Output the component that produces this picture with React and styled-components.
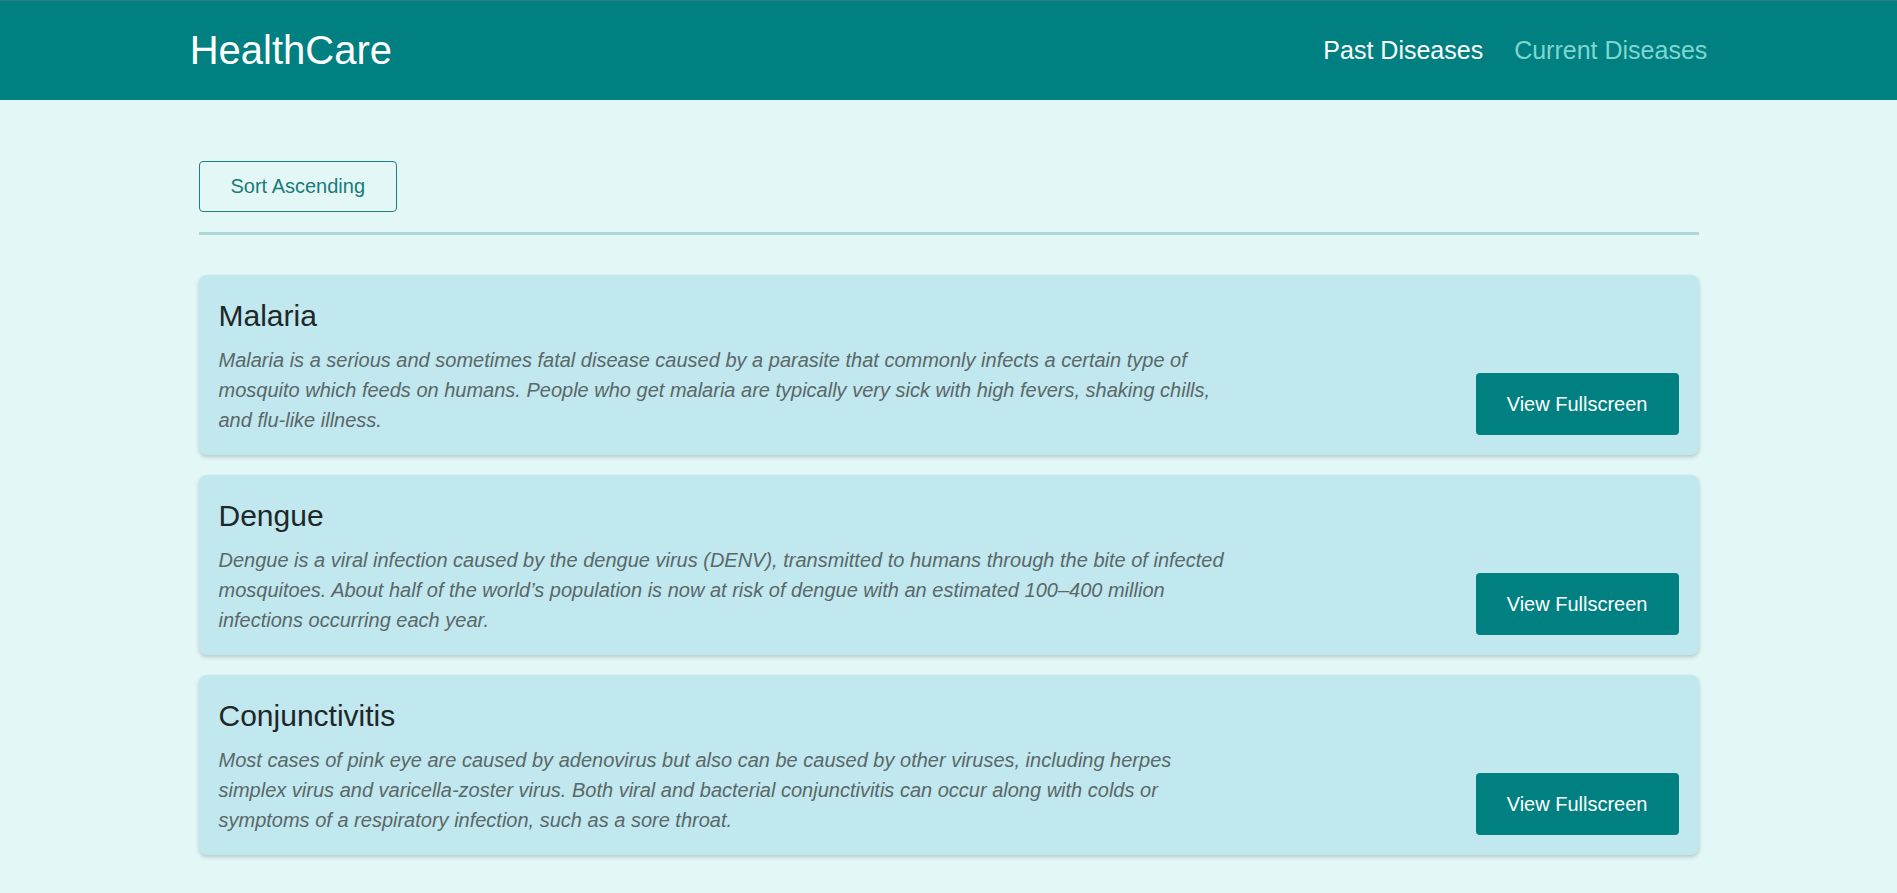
import styled, { createGlobalStyle } from "styled-components";

const GlobalStyle = createGlobalStyle`
  body {
    margin: 0;
    background-color: #e4f7f7;
    font-family: "Liberation Sans", Arial, sans-serif;
  }
`;

const diseases = [
  {
    id: 1,
    name: "Malaria",
    text: "Malaria is a serious and sometimes fatal disease caused by a parasite that commonly infects a certain type of mosquito which feeds on humans. People who get malaria are typically very sick with high fevers, shaking chills, and flu-like illness.",
  },
  {
    id: 2,
    name: "Dengue",
    text: "Dengue is a viral infection caused by the dengue virus (DENV), transmitted to humans through the bite of infected mosquitoes. About half of the world’s population is now at risk of dengue with an estimated 100–400 million infections occurring each year.",
  },
  {
    id: 3,
    name: "Conjunctivitis",
    text: "Most cases of pink eye are caused by adenovirus but also can be caused by other viruses, including herpes simplex virus and varicella-zoster virus. Both viral and bacterial conjunctivitis can occur along with colds or symptoms of a respiratory infection, such as a sore throat.",
  },
];

const App = () => {
  return (
    <>
      <GlobalStyle />
      <Navbar>
        <NavInner>
          <Brand>HealthCare</Brand>
          <NavLinks>
            <NavLink>Past Diseases</NavLink>
            <NavLink active>Current Diseases</NavLink>
          </NavLinks>
        </NavInner>
      </Navbar>
      <Main>
        <SortButton>Sort Ascending</SortButton>
        <Divider />
        {diseases.map((d) => (
          <Card key={d.id}>
            <CardText>
              <CardTitle>{d.name}</CardTitle>
              <CardDesc>{d.text}</CardDesc>
            </CardText>
            <ViewButton>View Fullscreen</ViewButton>
          </Card>
        ))}
      </Main>
    </>
  );
};

export default App;

const Navbar = styled.div`
  width: 100%;
  height: 100px;
  background-color: #008080;
  border-top: 1px solid #3a7480;
  box-sizing: border-box;
`;

const NavInner = styled.div`
  width: 80%;
  height: 100%;
  margin: 0 auto;
  display: flex;
  align-items: center;
  justify-content: space-between;
`;

const Brand = styled.div`
  color: #fff;
  font-size: 40px;
`;

const NavLinks = styled.div`
  display: flex;
  gap: 31px;
`;

const NavLink = styled.div`
  font-size: 25px;
  color: ${(p) => (p.active ? "#7ed6d1" : "#fff")};
  cursor: pointer;
`;

const Main = styled.div`
  width: 1500px;
  margin: 0 auto;
  padding: 61px 0 20px;
`;

const SortButton = styled.button`
  font-family: "Liberation Sans", Arial, sans-serif;
  font-size: 20px;
  line-height: 23px;
  color: #1b7a7a;
  background: transparent;
  border: 1px solid #1f7f7f;
  border-radius: 4px;
  padding: 13px 31px;
  cursor: pointer;
`;

const Divider = styled.div`
  height: 3px;
  background-color: #b0d6d6;
  margin: 20px 0 40px;
`;

const Card = styled.div`
  display: flex;
  justify-content: space-between;
  padding: 20px;
  margin-bottom: 20px;
  background-color: #c1e7ef;
  border-radius: 8px;
  box-shadow: 0 2px 4px rgba(0, 0, 0, 0.2);
`;

const CardText = styled.div`
  width: 70%;
`;

const CardTitle = styled.h2`
  margin: 0 0 8px;
  font-size: 30px;
  line-height: 42px;
  font-weight: 400;
  color: #1e2828;
`;

const CardDesc = styled.p`
  margin: 0;
  font-size: 20px;
  line-height: 30px;
  font-style: italic;
  color: #5a6868;
`;

const ViewButton = styled.button`
  align-self: flex-end;
  font-family: "Liberation Sans", Arial, sans-serif;
  font-size: 20px;
  line-height: 22px;
  color: #fff;
  background-color: #008080;
  border: none;
  border-radius: 4px;
  padding: 20px 31px;
  cursor: pointer;
`;
